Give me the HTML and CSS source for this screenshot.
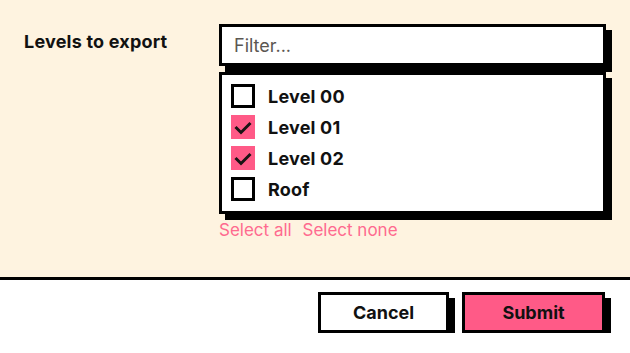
FILE: index.html
```html
<!DOCTYPE html>
<html lang="en">
<head>
  <meta charset="UTF-8">
  <title>Export levels</title>
  <link rel="stylesheet" href="styles.css">
</head>
<body>

  <form class="dialog">
    <div class="content">
      <div class="field-label">Levels to export</div>
      <div class="field">
        <input class="filter" type="text" placeholder="Filter...">

        <!-- level list -->
        <div class="options">
          <label class="option">
            <span class="box"></span>
            <span>Level 00</span>
          </label>
          <label class="option">
            <span class="box checked">
              <svg width="24" height="24" viewBox="0 0 24 24"><polyline points="4.5,12 10,17.5 19.5,8" fill="none" stroke="#1a1414" stroke-width="3"/></svg>
            </span>
            <span>Level 01</span>
          </label>
          <label class="option">
            <span class="box checked">
              <svg width="24" height="24" viewBox="0 0 24 24"><polyline points="4.5,12 10,17.5 19.5,8" fill="none" stroke="#1a1414" stroke-width="3"/></svg>
            </span>
            <span>Level 02</span>
          </label>
          <label class="option">
            <span class="box"></span>
            <span>Roof</span>
          </label>
        </div>

        <div class="links">
          <a href="#">Select all</a>
          <a href="#">Select none</a>
        </div>
      </div>
    </div>

    <div class="actions">
      <button type="button" class="btn">Cancel</button>
      <button type="button" class="btn primary">Submit</button>
    </div>
  </form>

</body>
</html>
```

FILE: styles.css
```css
body {
  margin: 0;
  font-family: Inter, 'Noto Sans', sans-serif;
  color: #111;
  background: white;
}

.content {
  display: flex;
  background: #fef3e0;
  padding: 24px 24px 0 24px;
  height: 253px;
  border-bottom: 3px solid black;
}

.field-label {
  width: 195px;
  flex-shrink: 0;
  font-size: 18px;
  font-weight: 700;
  letter-spacing: 0.2px;
  padding-top: 7px;
}

.field {
  flex: 1;
}

.filter {
  display: block;
  box-sizing: border-box;
  width: 100%;
  height: 42px;
  border: 3px solid black;
  box-shadow: 6px 6px 0 black;
  padding: 0 12px;
  font-family: inherit;
  font-size: 18px;
  background: white;
  outline: none;
}

.filter::placeholder {
  color: #5b5752;
}

.options {
  margin-top: 6px;
  background: white;
  border: 3px solid black;
  box-shadow: 6px 6px 0 black;
  padding: 9px 9px 10px;
  display: flex;
  flex-direction: column;
  gap: 7px;
}

.option {
  display: flex;
  align-items: center;
  gap: 13px;
  font-size: 18px;
  font-weight: 700;
  letter-spacing: 0.2px;
  height: 24px;
}

.box {
  box-sizing: border-box;
  width: 24px;
  height: 24px;
  border: 3px solid black;
  background: white;
}

.box.checked {
  border: none;
  background: #ff5a87;
}

.box svg {
  display: block;
}

.links {
  margin-top: 6px;
  font-size: 17px;
}

.links a {
  color: #ff6a8f;
  text-decoration: none;
  margin-right: 6px;
}

.actions {
  display: flex;
  justify-content: flex-end;
  gap: 13px;
  padding: 12px 25px 0 0;
}

.btn {
  width: 131px;
  height: 41px;
  border: 3px solid black;
  background: white;
  box-shadow: 6px 6px 0 black;
  font-family: inherit;
  font-size: 18px;
  font-weight: 700;
  color: #111;
  cursor: pointer;
}

.btn.primary {
  width: 143px;
  background: #ff5a87;
}
```
